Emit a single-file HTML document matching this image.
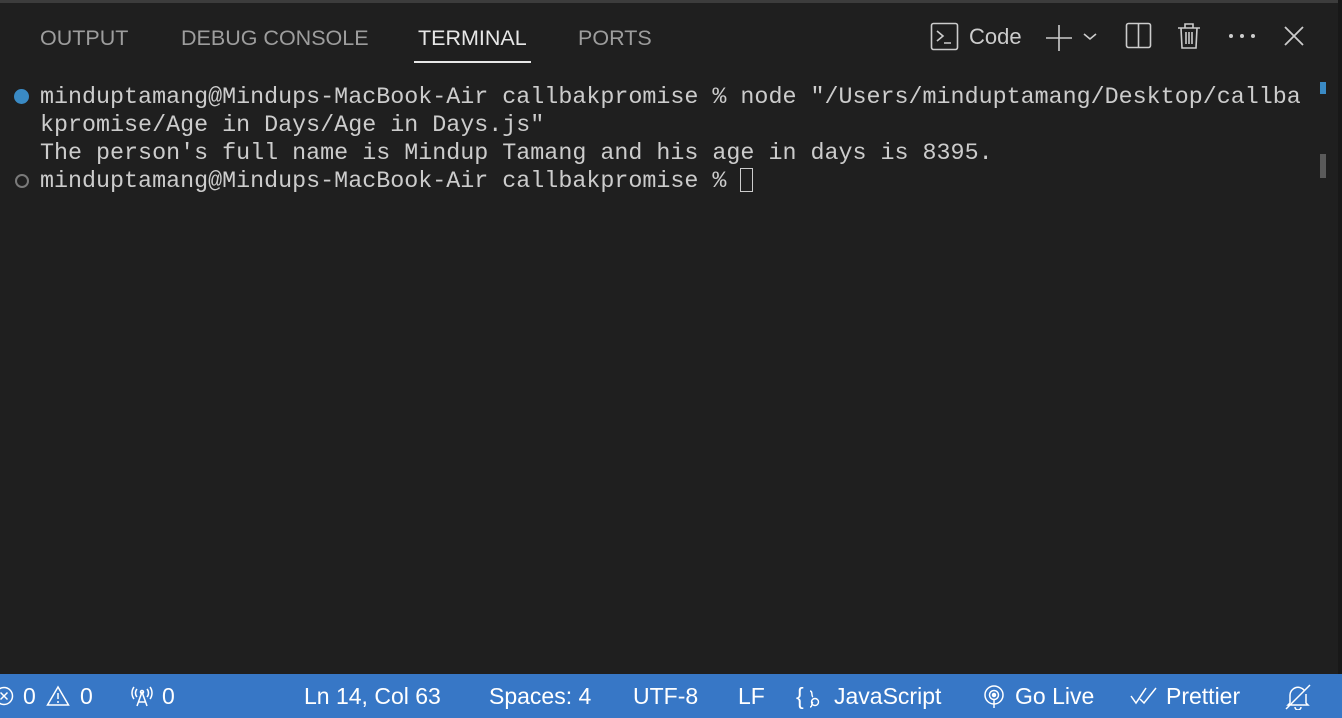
<!DOCTYPE html>
<html><head><style>
body{margin:0;width:1342px;height:718px;background:#1f1f1f;overflow:hidden;position:relative;font-family:"Liberation Sans",sans-serif}
.top{position:absolute;left:0;top:0;width:1342px;height:3px;background:#3c3c3c}
.rb{position:absolute;right:0;top:0;width:4px;height:718px;background:#181818}
.tab{position:absolute;top:26px;font-size:21.5px;color:#9d9d9d}
.term{position:absolute;left:40px;top:84px;font-family:"Liberation Mono",monospace;font-size:23.35px;line-height:28px;color:#cccccc;white-space:pre}
.sb{position:absolute;left:0;top:674px;width:1342px;height:44px;background:#3777c6;color:#fff;font-size:23px}
.sb span{position:absolute;top:9px;white-space:nowrap;line-height:26px}
svg{position:absolute}
</style></head><body>
<div class="top"></div>
<div class="tab" style="left:40px">OUTPUT</div>
<div class="tab" style="left:181px">DEBUG CONSOLE</div>
<div class="tab" style="left:418px;color:#e7e7e7">TERMINAL</div>
<div style="position:absolute;left:414px;top:61px;width:117px;height:2px;background:#e7e7e7"></div>
<div class="tab" style="left:578px">PORTS</div>
<svg style="left:930px;top:22px" width="30" height="30" viewBox="0 0 30 30" fill="none" stroke="#ccc" stroke-width="1.6"><rect x="1.5" y="1.5" width="26" height="26" rx="2"/><path d="M7 9l6 5-6 5M14 21h7"/></svg>
<div style="position:absolute;left:969px;top:24px;font-size:22px;color:#ccc">Code</div>
<svg style="left:1045px;top:24px" width="60" height="28" fill="none" stroke="#ccc" stroke-width="1.6"><path d="M14 1v26M1 14h26M39 10l6 5 6-5"/></svg>
<svg style="left:1125px;top:22px" width="28" height="28" fill="none" stroke="#ccc" stroke-width="1.6"><rect x="1.5" y="1.5" width="24" height="24" rx="2"/><path d="M13.5 1.5v24"/></svg>
<svg style="left:1177px;top:22px" width="26" height="28" fill="none" stroke="#ccc" stroke-width="1.6"><path d="M1 6h22M8 6V2h8v4M4 6l1 20h14l1-20M9 10v12M12 10v12M15 10v12"/></svg>
<svg style="left:1228px;top:33px" width="30" height="6" fill="#ccc"><circle cx="3" cy="3" r="2"/><circle cx="14" cy="3" r="2"/><circle cx="25" cy="3" r="2"/></svg>
<svg style="left:1284px;top:26px" width="20" height="20" fill="none" stroke="#ccc" stroke-width="1.8"><path d="M1 1l18 18M19 1L1 19"/></svg>
<div style="position:absolute;left:14px;top:89px;width:15px;height:15px;border-radius:50%;background:#3a8ac4"></div>
<div style="position:absolute;left:15px;top:174px;width:10px;height:10px;border-radius:50%;border:2px solid #7a7a7a"></div>
<div class="term">minduptamang@Mindups-MacBook-Air callbakpromise % node "/Users/minduptamang/Desktop/callba
kpromise/Age in Days/Age in Days.js"
The person's full name is Mindup Tamang and his age in days is 8395.
minduptamang@Mindups-MacBook-Air callbakpromise % </div>
<div style="position:absolute;left:740px;top:168px;width:13px;height:24px;border:1.5px solid #ccc;box-sizing:border-box"></div>
<div style="position:absolute;left:1320px;top:82px;width:6px;height:12px;background:#3a8ac4"></div>
<div style="position:absolute;left:1320px;top:154px;width:6px;height:24px;background:#5a5a5a"></div>
<div class="rb"></div>
<div class="sb">
<svg style="left:-6px;top:12px" width="20" height="20" fill="none" stroke="#fff" stroke-width="1.5"><circle cx="10" cy="10" r="8.5"/><path d="M6.5 6.5l7 7M13.5 6.5l-7 7"/></svg>
<span style="left:23px">0</span>
<svg style="left:46px;top:11px" width="24" height="22" fill="none" stroke="#fff" stroke-width="1.5"><path d="M12 2L1.5 20h21z M12 8v6 M12 16v2"/></svg>
<span style="left:80px">0</span>
<svg style="left:128px;top:10px" width="28" height="24" fill="none" stroke="#fff" stroke-width="1.5"><path d="M14 8l-5 14M14 8l5 14M10 18h8M6 3a10 10 0 0 0 0 12M22 3a10 10 0 0 1 0 12M9 5a6 6 0 0 0 0 8M19 5a6 6 0 0 1 0 8"/><circle cx="14" cy="8" r="1.5"/></svg>
<span style="left:162px">0</span>
<span style="left:304px">Ln 14, Col 63</span>
<span style="left:489px">Spaces: 4</span>
<span style="left:633px">UTF-8</span>
<span style="left:738px">LF</span>
<span style="left:796px">{</span>
<svg style="left:808px;top:16px" width="12" height="18" fill="none" stroke="#fff" stroke-width="1.4"><path d="M2 1c3 0 1 5 3 6M2 17c3 0 1-4 3-5"/><circle cx="7" cy="12" r="3.5"/></svg>
<span style="left:834px">JavaScript</span>
<svg style="left:983px;top:11px" width="22" height="24" fill="none" stroke="#fff" stroke-width="1.5"><circle cx="11" cy="10" r="9"/><circle cx="11" cy="10" r="4.5"/><circle cx="11" cy="10" r="1.5" fill="#fff"/><path d="M11 15v8"/></svg>
<span style="left:1015px">Go Live</span>
<svg style="left:1130px;top:13px" width="30" height="18" fill="none" stroke="#fff" stroke-width="1.5"><path d="M1 9l5 7 10-15M10 12l4 4 12-15"/></svg>
<span style="left:1166px">Prettier</span>
<svg style="left:1284px;top:10px" width="28" height="26" fill="none" stroke="#fff" stroke-width="1.5"><path d="M6 19V11a8 8 0 0 1 14-5M22 10v9l2 2H4l2-2M11 23a3 3 0 0 0 6 0M2 25L26 1"/></svg>
</div>
</body></html>
